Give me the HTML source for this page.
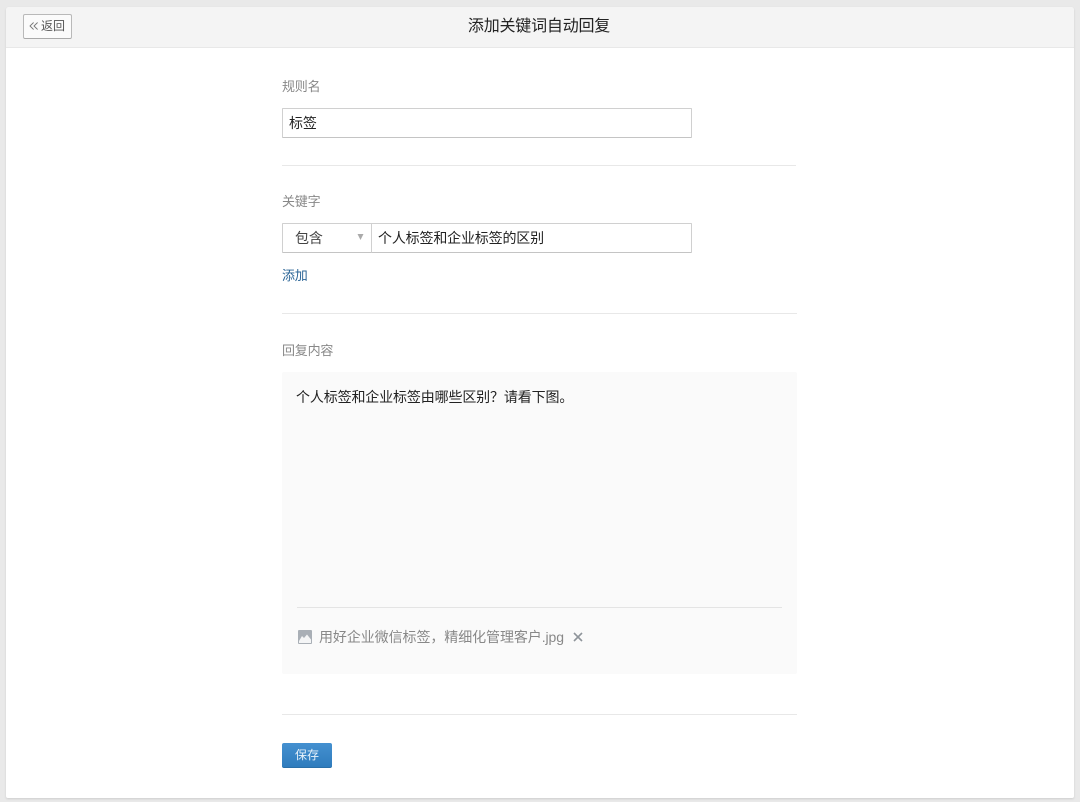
<!DOCTYPE html>
<html lang="zh">
<head>
<meta charset="utf-8">
<style>
html,body{margin:0;padding:0;width:1080px;height:802px;overflow:hidden;background:#e9e9e9;font-family:"Liberation Sans","Noto Sans CJK SC",sans-serif;}
*{box-sizing:border-box;}
.abs{position:absolute;white-space:nowrap;}
.card{position:absolute;left:6px;top:7px;width:1068px;height:791px;background:#fff;border-radius:3px 3px 2px 2px;box-shadow:0 1px 2px rgba(0,0,0,.12);}
.head{position:absolute;left:6px;top:7px;width:1068px;height:41px;background:#f4f4f4;border-bottom:1px solid #e8e8e8;border-radius:3px 3px 0 0;}
.back{position:absolute;left:23px;top:14px;width:49px;height:25px;background:#fbfbfb;border:1px solid #b9b9b9;border-bottom-color:#aaa;border-radius:2px;font-size:12px;line-height:23px;color:#555;padding-left:17px;}
.title{left:268px;width:542px;top:16px;text-align:center;font-size:16px;letter-spacing:-.2px;line-height:22px;color:#222;}
.label{left:282px;font-size:13px;letter-spacing:-.2px;line-height:18px;color:#888;}
.input{position:absolute;background:#fff;border:1px solid #d0d0d0;border-bottom-color:#c4c4c4;height:30px;border-radius:1px;font-size:14px;letter-spacing:-.17px;line-height:28px;color:#222;padding-left:6px;white-space:nowrap;}
.hr{position:absolute;height:1px;background:#e8e8e8;}
</style>
</head>
<body>
<div class="card"></div>
<div class="head"></div>
<div class="back">返回</div>
<svg class="abs" style="left:29px;top:21px" width="10" height="11" viewBox="0 0 10 11" fill="none" stroke="#777" stroke-width="0.9"><path d="M4.6 1.5 L1 5 L4.6 8.5M8.6 1.5 L5 5 L8.6 8.5"/></svg>
<div class="abs title">添加关键词自动回复</div>

<div class="abs label" style="top:78px">规则名</div>
<div class="input" style="left:282px;top:108px;width:410px">标签</div>
<div class="hr" style="left:282px;top:165px;width:514px"></div>

<div class="abs label" style="top:193px">关键字</div>
<div class="input" style="left:282px;top:223px;width:90px;padding-left:12px;color:#444">包含</div>
<div class="input" style="left:371px;top:223px;width:321px">个人标签和企业标签的区别</div>
<svg class="abs" style="left:357px;top:233px" width="7" height="8" viewBox="0 0 7 8"><path d="M0.5 1 H6.5 L3.5 7 Z" fill="#aaa"/></svg>
<div class="abs" style="left:282px;top:267px;font-size:13px;letter-spacing:-.2px;line-height:18px;color:#2a6496">添加</div>
<div class="hr" style="left:282px;top:313px;width:515px"></div>

<div class="abs label" style="top:342px">回复内容</div>
<div style="position:absolute;left:282px;top:372px;width:515px;height:302px;background:#fafafa;border-radius:2px"></div>
<div class="abs" style="left:296px;top:387px;font-size:14px;letter-spacing:-.14px;line-height:20px;color:#222">个人标签和企业标签由哪些区别？请看下图。</div>
<div class="hr" style="left:297px;top:607px;width:485px;background:#e4e4e4"></div>
<svg class="abs" style="left:298px;top:630px" width="14" height="14" viewBox="0 0 14 14"><rect width="14" height="14" rx="1" fill="#a9afb6"/><path d="M1 11 L4 6 L6 8 L9 4.5 L13 9.5 V13 H1 Z" fill="#f4f5f6"/></svg>
<div class="abs" style="left:319px;top:627px;font-size:14px;letter-spacing:-.08px;line-height:20px;color:#888">用好企业微信标签，精细化管理客户.jpg</div>
<svg class="abs" style="left:572px;top:631px" width="12" height="12" viewBox="0 0 12 12" fill="none" stroke="#8e949a" stroke-width="1.6"><path d="M2 2 L10 10M10 2 L2 10"/></svg>

<div class="hr" style="left:282px;top:714px;width:515px"></div>
<div class="abs" style="left:282px;top:743px;width:50px;height:25px;background:linear-gradient(#4490d0,#2f7cbd);border-radius:2px;border-bottom:1px solid #2a6fa8;color:#e8f2fa;font-size:12px;line-height:24px;text-align:center">保存</div>
</body>
</html>
